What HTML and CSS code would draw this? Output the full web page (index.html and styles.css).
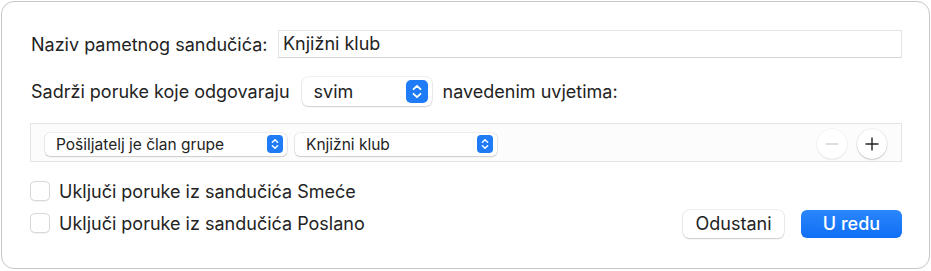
FILE: index.html
```html
<!DOCTYPE html>
<html lang="hr">
<head>
<meta charset="utf-8">
<link rel="stylesheet" href="styles.css">
</head>
<body>
<div class="window">
  <div class="row row-name">
    <span class="label">Naziv pametnog sandučića:</span>
    <div class="field">Knjižni klub</div>
  </div>
  <div class="row row-match">
    <span class="label">Sadrži poruke koje odgovaraju</span>
    <div class="popup popup-big">
      <span class="popup-text">svim</span>
      <svg class="stepper stepper-big" viewBox="0 0 22 23"><rect width="22" height="23" rx="5" fill="#1f7bf6"/><path d="M7.5 9.2 L11 5.8 L14.5 9.2 M7.5 13.8 L11 17.2 L14.5 13.8" fill="none" stroke="#fff" stroke-width="1.8" stroke-linecap="round" stroke-linejoin="round"/></svg>
    </div>
    <span class="label">navedenim uvjetima:</span>
  </div>
  <div class="criteria">
    <div class="popup popup-small popup-sender">
      <span class="popup-text">Pošiljatelj je član grupe</span>
      <svg class="stepper stepper-small" viewBox="0 0 16 18"><rect width="16" height="18" rx="4" fill="#1f7bf6"/><path d="M5.4 7.3 L8 4.8 L10.6 7.3 M5.4 10.7 L8 13.2 L10.6 10.7" fill="none" stroke="#fff" stroke-width="1.5" stroke-linecap="round" stroke-linejoin="round"/></svg>
    </div>
    <div class="popup popup-small popup-group">
      <span class="popup-text">Knjižni klub</span>
      <svg class="stepper stepper-small" viewBox="0 0 16 18"><rect width="16" height="18" rx="4" fill="#1f7bf6"/><path d="M5.4 7.3 L8 4.8 L10.6 7.3 M5.4 10.7 L8 13.2 L10.6 10.7" fill="none" stroke="#fff" stroke-width="1.5" stroke-linecap="round" stroke-linejoin="round"/></svg>
    </div>
    <div class="spacer"></div>
    <div class="round-btn round-disabled"><svg viewBox="0 0 30 30"><path d="M9 15 H21" stroke="#d0d0d0" stroke-width="1.4"/></svg></div>
    <div class="round-btn"><svg viewBox="0 0 30 30"><path d="M8.5 15 H21.5 M15 8.5 V21.5" stroke="#222" stroke-width="1.4"/></svg></div>
  </div>
  <div class="bottom">
    <div class="checks">
      <label class="check"><span class="box"></span><span class="check-text">Uključi poruke iz sandučića Smeće</span></label>
      <label class="check"><span class="box"></span><span class="check-text">Uključi poruke iz sandučića Poslano</span></label>
    </div>
    <div class="buttons">
      <div class="btn btn-cancel">Odustani</div>
      <div class="btn btn-ok">U redu</div>
    </div>
  </div>
</div>
</body>
</html>
```
FILE: styles.css
```css
html, body {
  margin: 0;
  padding: 0;
  background: #ffffff;
}
body {
  padding: 1px;
  font-family: Inter, "Noto Sans", sans-serif;
  color: #232323;
}
.window {
  box-sizing: border-box;
  width: 929px;
  height: 268px;
  border: 1px solid #c6c6c6;
  border-radius: 13px;
  background: #ffffff;
  padding: 28px 27px 0 28px;
}
.row {
  display: flex;
  align-items: center;
}
.label {
  font-size: 18px;
  white-space: nowrap;
}
.row-name {
  height: 28px;
}
.row-name .label {
  margin-left: 1px;
  width: 247px;
}
.field {
  flex: 1;
  box-sizing: border-box;
  height: 28px;
  border: 1px solid #e3e3e3;
  border-bottom-color: #d6d6d6;
  font-size: 18px;
  line-height: 26px;
  padding-left: 4px;
}
.row-match {
  margin-top: 19px;
  height: 29px;
}
.row-match .label:first-child {
  margin-left: 1px;
}
.popup {
  box-sizing: border-box;
  display: flex;
  align-items: center;
  background: #fff;
  border-radius: 6px;
  box-shadow: 0 0 0 0.5px rgba(0,0,0,0.12), 0 1px 1.5px rgba(0,0,0,0.14);
}
.popup-big {
  width: 130px;
  height: 29px;
  margin: 0 11px 0 12px;
  padding: 0 4px 0 12px;
}
.popup-text {
  flex: 1;
  white-space: nowrap;
}
.popup-big .popup-text {
  font-size: 18px;
}
.stepper-big {
  width: 22px;
  height: 23px;
}
.criteria {
  box-sizing: border-box;
  margin-top: 17px;
  height: 39px;
  border: 1px solid #e4e4e4;
  background: #fcfcfc;
  display: flex;
  align-items: center;
  padding: 3px 14px 0 14px;
}
.popup-small {
  height: 23px;
  padding: 0 4px 0 11px;
  border-radius: 5px;
}
.popup-small .popup-text {
  font-size: 15.5px;
}
.popup-sender {
  width: 242px;
}
.popup-group {
  width: 202px;
  margin-left: 8px;
}
.stepper-small {
  width: 16px;
  height: 18px;
}
.spacer {
  flex: 1;
}
.round-btn {
  width: 30px;
  height: 30px;
  border-radius: 50%;
  background: #fff;
  box-shadow: 0 0 0 0.5px rgba(0,0,0,0.1), 0 1px 1.5px rgba(0,0,0,0.16);
  margin-left: 10px;
}
.round-btn svg {
  width: 30px;
  height: 30px;
  display: block;
}
.round-disabled {
  box-shadow: 0 0 0 0.5px rgba(0,0,0,0.06), 0 1px 1.5px rgba(0,0,0,0.07);
}
.bottom {
  display: flex;
  margin-top: 19px;
}
.checks {
  flex: 1;
  display: flex;
  flex-direction: column;
  gap: 12px;
}
.check {
  display: flex;
  align-items: center;
  height: 20px;
}
.box {
  box-sizing: border-box;
  width: 20px;
  height: 20px;
  border: 1px solid #d8d8d8;
  border-radius: 5px;
  background: #fff;
  box-shadow: 0 0.5px 1px rgba(0,0,0,0.05);
}
.check-text {
  margin-left: 9px;
  font-size: 18px;
  white-space: nowrap;
}
.buttons {
  display: flex;
  margin-top: 29px;
  gap: 17px;
}
.btn {
  box-sizing: border-box;
  height: 28px;
  width: 101px;
  border-radius: 6px;
  font-size: 18px;
  line-height: 28px;
  text-align: center;
}
.btn-cancel {
  background: #fff;
  box-shadow: 0 0 0 0.5px rgba(0,0,0,0.12), 0 1px 1.5px rgba(0,0,0,0.16);
}
.btn-ok {
  background: linear-gradient(#2a86fb, #0f6ff5);
  color: #fff;
  font-weight: 500;
}
```
